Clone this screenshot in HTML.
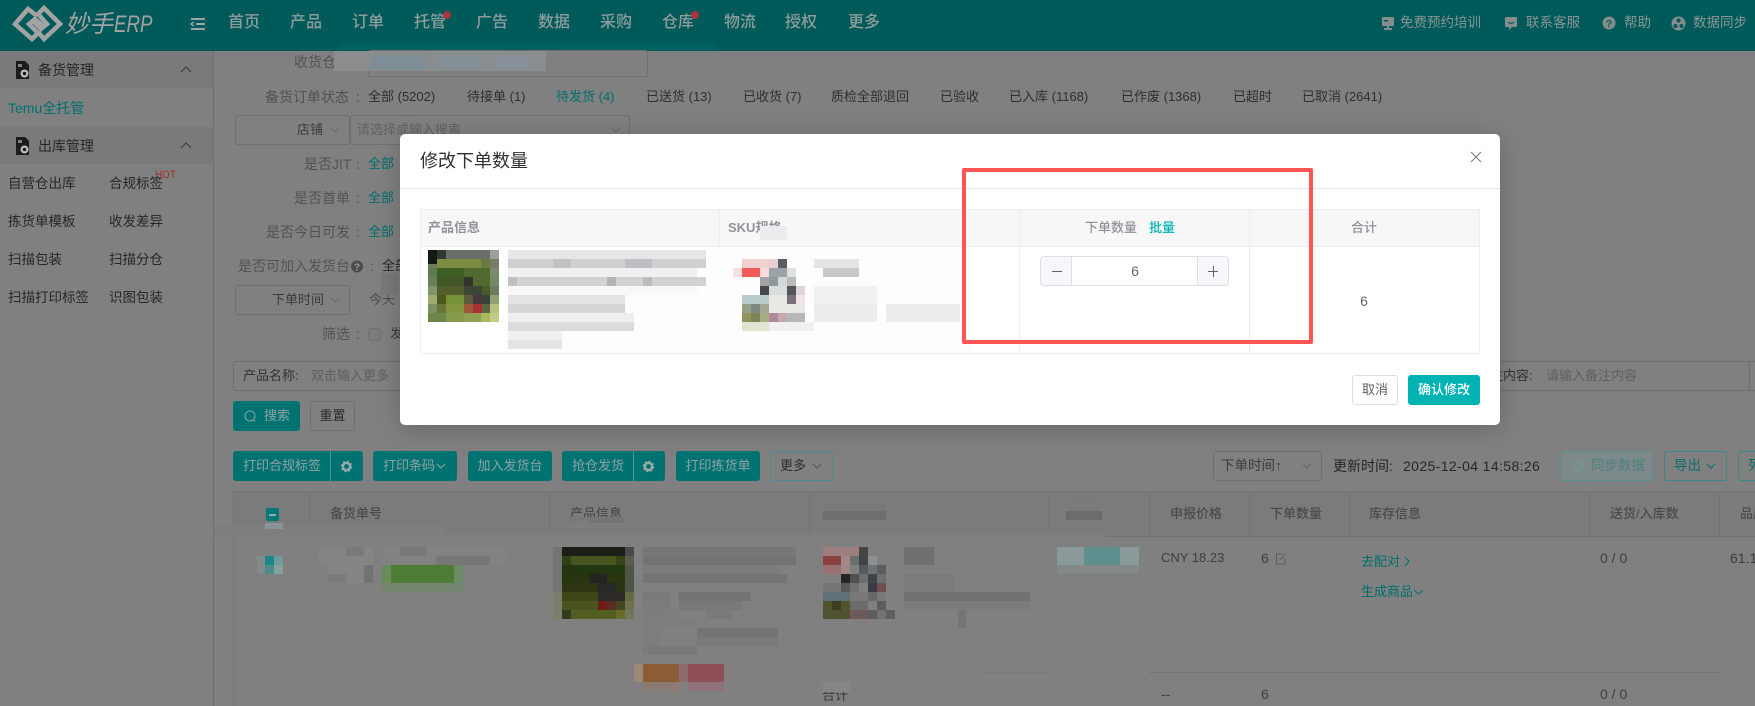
<!DOCTYPE html>
<html lang="zh"><head><meta charset="utf-8"><title>修改下单数量</title>
<style>
*{box-sizing:border-box}
html,body{margin:0;padding:0}
body{width:1755px;height:706px;position:relative;overflow:hidden;background:#808080;font:13px/20px "Liberation Sans","Noto Sans CJK SC",sans-serif;color:#333}
.t{position:absolute;white-space:nowrap;line-height:20px}
.b{position:absolute}
svg{position:absolute;overflow:visible}
.nav{font-size:16px;font-weight:500;color:#8f9c9c;top:13px;width:32px}
.top{color:#8a9595;top:13px;font-size:13.5px}
.side{color:#262626;font-size:14px}
.lab{color:#525252;font-size:14px}
.st{color:#2e2e2e;top:87px}
.tl{color:#006e6e}
.btn{position:absolute;background:#007272;border-radius:3px;height:30px;color:#90a2a2;font-size:13px;line-height:30px;text-align:center;white-space:nowrap}
.sep{position:absolute;top:0;width:1px;height:30px;background:#4f9292}
.box{position:absolute;border:1px solid #6f6f6f;border-radius:3px}
.th{color:#4a4a4a;font-size:13px;font-weight:500;top:504px;position:absolute;white-space:nowrap;line-height:20px}
.d{color:#3a3a3a}
#dlg{position:absolute;left:400px;top:134px;width:1100px;height:291px;background:#fff;border-radius:5px;box-shadow:0 4px 26px rgba(0,0,0,.2)}
.dt{color:#909399;font-weight:700;font-size:13px}
</style></head><body>

<!-- header -->
<div class="b" style="left:0;top:0;width:1755px;height:51px;background:#005a5a"></div>
<div class="b" style="left:337px;top:43px;width:381px;height:8px;background:#005f5f;border-radius:6px 6px 0 0"></div>
<svg style="left:0;top:0" width="70" height="51" fill="none" stroke="#a3a3a3" stroke-width="4.5" stroke-linejoin="miter">
<path d="M37 16 L28 9 L15 24 L32 39 L38 33 L29 24 L35 19 L43 26"/>
<path d="M38 32 L44 39 L60 24 L44 8 L38 14 L47 24 L41 29 L33 21"/>
</svg>
<div class="t" style="left:65px;top:11px;font-size:24px;line-height:28px;font-style:italic;color:#a3a3a3">妙手</div>
<div class="t" style="left:114px;top:11px;font-size:24px;line-height:28px;font-style:italic;color:#a3a3a3;transform:scaleX(.78);transform-origin:0 0">ERP</div>
<svg style="left:190px;top:17px" width="16" height="14" fill="none" stroke="#9aa3a3" stroke-width="2"><path d="M1 2H15M6 7H15M1 12H15"/><path d="M4 5L1 7L4 9" stroke-width="1.4"/></svg>
<div class="t nav" style="left:228px">首页</div><div class="t nav" style="left:290px">产品</div><div class="t nav" style="left:352px">订单</div><div class="t nav" style="left:414px">托管</div><div class="t nav" style="left:476px">广告</div><div class="t nav" style="left:538px">数据</div><div class="t nav" style="left:600px">采购</div><div class="t nav" style="left:662px">仓库</div><div class="t nav" style="left:724px">物流</div><div class="t nav" style="left:785px">授权</div><div class="t nav" style="left:848px">更多</div>
<div class="b" style="left:443px;top:11px;width:8px;height:8px;border-radius:50%;background:#a8343f"></div>
<div class="b" style="left:691px;top:11px;width:8px;height:8px;border-radius:50%;background:#a8343f"></div>
<svg style="left:1381px;top:16px" width="14" height="15" fill="#858c8c"><rect x="1" y="1" width="12" height="9" rx="1"/><rect x="6" y="10" width="2" height="3"/><rect x="3" y="12" width="8" height="2"/><rect x="3" y="4" width="4" height="1.5" fill="#005a5a"/></svg>
<div class="t top" style="left:1400px">免费预约培训</div>
<svg style="left:1504px;top:16px" width="14" height="15" fill="#858c8c"><path d="M1 2Q1 1 2 1H12Q13 1 13 2V10Q13 11 12 11H8L5 14V11H2Q1 11 1 10Z"/><path d="M4 6Q7 9 10 6" stroke="#005a5a" fill="none" stroke-width="1.2"/></svg>
<div class="t top" style="left:1526px">联系客服</div>
<svg style="left:1602px;top:16px" width="14" height="14"><circle cx="7" cy="7" r="6.5" fill="#858c8c"/><text x="7" y="11" font-size="10" font-weight="700" text-anchor="middle" fill="#005a5a" font-family="Liberation Sans">?</text></svg>
<div class="t top" style="left:1624px">帮助</div>
<svg style="left:1671px;top:16px" width="15" height="15"><circle cx="7.5" cy="7.5" r="7" fill="#858c8c"/><circle cx="7.5" cy="4.5" r="2" fill="#005a5a"/><circle cx="4.5" cy="10" r="2" fill="#005a5a"/><circle cx="10.5" cy="10" r="2" fill="#005a5a"/></svg>
<div class="t top" style="left:1693px">数据同步</div>

<!-- sidebar -->
<div class="b" style="left:213px;top:51px;width:1px;height:655px;background:#6f6f6f"></div>
<div class="b" style="left:0;top:51px;width:213px;height:37px;background:#7a7a7a"></div>
<div class="b" style="left:0;top:127px;width:213px;height:37px;background:#7a7a7a"></div>
<svg style="left:15px;top:61px" width="16" height="18"><path d="M1 0H10L14 4V18H1Z" fill="#1d1a1c"/><rect x="3" y="3" width="4" height="3" fill="#808080"/><circle cx="9.5" cy="12.5" r="4" fill="#bbb"/><circle cx="9.5" cy="12.5" r="1.7" fill="#1d1a1c"/></svg>
<div class="t side" style="left:38px;top:60px">备货管理</div>
<svg style="left:180px;top:66px" width="12" height="8" fill="none" stroke="#3a3a3a" stroke-width="1"><path d="M1 6L6 1L11 6"/></svg>
<div class="t tl" style="left:8px;top:98px;font-size:14px;color:#007070">Temu全托管</div>
<svg style="left:15px;top:137px" width="16" height="18"><path d="M1 0H10L14 4V18H1Z" fill="#1d1a1c"/><rect x="3" y="3" width="4" height="3" fill="#808080"/><circle cx="9.5" cy="12.5" r="4" fill="#bbb"/><circle cx="9.5" cy="12.5" r="1.7" fill="#1d1a1c"/></svg>
<div class="t side" style="left:38px;top:136px">出库管理</div>
<svg style="left:180px;top:142px" width="12" height="8" fill="none" stroke="#3a3a3a" stroke-width="1"><path d="M1 6L6 1L11 6"/></svg>
<div class="t side" style="left:8px;top:174px;font-size:13.5px">自营仓出库</div><div class="t side" style="left:109px;top:174px;font-size:13.5px">合规标签</div>
<div class="t" style="left:155px;top:170px;font-size:11px;line-height:11px;color:#a03030;transform:scaleX(.9);transform-origin:0 0">HOT</div>
<div class="t side" style="left:8px;top:212px;font-size:13.5px">拣货单模板</div><div class="t side" style="left:109px;top:212px;font-size:13.5px">收发差异</div>
<div class="t side" style="left:8px;top:250px;font-size:13.5px">扫描包装</div><div class="t side" style="left:109px;top:250px;font-size:13.5px">扫描分仓</div>
<div class="t side" style="left:8px;top:288px;font-size:13.5px">扫描打印标签</div><div class="t side" style="left:109px;top:288px;font-size:13.5px">识图包装</div>

<!-- filters -->
<div class="t lab" style="left:294px;top:52px">收货仓</div>
<div class="box" style="left:368px;top:50px;width:280px;height:27px"></div>
<svg style="left:0;top:0" width="1755" height="706"><rect x="334" y="51" width="212" height="20" fill="#8a8c8e"/><rect x="371" y="55" width="55" height="15" fill="#7f8e96"/><rect x="436" y="55" width="46" height="15" fill="#849095"/><rect x="497" y="55" width="32" height="15" fill="#88909a"/></svg>
<div class="t lab" style="left:265px;top:87px;font-size:14px">备货订单状态</div><div class="t lab" style="left:356px;top:87px">:</div>
<div class="t st" style="left:368px">全部 (5202)</div><div class="t st" style="left:467px">待接单 (1)</div><div class="t st" style="left:556px;color:#006e6e">待发货 (4)</div><div class="t st" style="left:646px">已送货 (13)</div><div class="t st" style="left:743px">已收货 (7)</div><div class="t st" style="left:831px">质检全部退回</div><div class="t st" style="left:940px">已验收</div><div class="t st" style="left:1009px">已入库 (1168)</div><div class="t st" style="left:1121px">已作废 (1368)</div><div class="t st" style="left:1233px">已超时</div><div class="t st" style="left:1302px">已取消 (2641)</div>
<div class="box" style="left:235px;top:115px;width:115px;height:30px"></div>
<div class="t d" style="left:297px;top:120px">店铺</div>
<svg style="left:330px;top:127px" width="10" height="6" fill="none" stroke="#666"><path d="M1 1L5 5L9 1"/></svg>
<div class="box" style="left:350px;top:115px;width:280px;height:30px"></div>
<div class="t" style="left:357px;top:120px;color:#626262">请选择或输入搜索</div>
<svg style="left:611px;top:127px" width="10" height="6" fill="none" stroke="#666"><path d="M1 1L5 5L9 1"/></svg>
<div class="t lab" style="left:304px;top:154px">是否JIT</div><div class="t lab" style="left:356px;top:154px">:</div><div class="t tl" style="left:368px;top:154px">全部</div>
<div class="t lab" style="left:294px;top:188px">是否首单</div><div class="t lab" style="left:356px;top:188px">:</div><div class="t tl" style="left:368px;top:188px">全部</div>
<div class="t lab" style="left:266px;top:222px">是否今日可发</div><div class="t lab" style="left:356px;top:222px">:</div><div class="t tl" style="left:368px;top:222px">全部</div>
<div class="t lab" style="left:238px;top:256px">是否可加入发货台</div>
<svg style="left:351px;top:260px" width="13" height="13"><circle cx="6" cy="6.5" r="6" fill="#4c4c4c"/><text x="6" y="10.3" font-size="10" font-weight="700" text-anchor="middle" fill="#999" font-family="Liberation Sans">?</text></svg>
<div class="t lab" style="left:370px;top:256px">:</div><div class="t d" style="left:382px;top:256px;color:#262626">全部</div>
<div class="box" style="left:235px;top:285px;width:115px;height:30px"></div>
<div class="t d" style="left:272px;top:290px">下单时间</div>
<svg style="left:330px;top:297px" width="10" height="6" fill="none" stroke="#666"><path d="M1 1L5 5L9 1"/></svg>
<div class="t" style="left:369px;top:290px;color:#4d4d4d">今天</div>
<div class="b" style="left:381px;top:273px;width:18px;height:22px;background:#7a7a7a"></div>
<div class="t lab" style="left:322px;top:324px">筛选</div><div class="t lab" style="left:356px;top:324px">:</div>
<div class="box" style="left:368px;top:328px;width:13px;height:13px;background:#7c7c7c"></div>
<div class="t d" style="left:390px;top:324px">发</div>

<div class="box" style="left:233px;top:361px;width:1530px;height:30px"></div>
<div class="b" style="left:1749px;top:361px;width:1px;height:30px;background:#6f6f6f"></div>
<div class="t" style="left:243px;top:366px;color:#343434;font-size:13px">产品名称:</div>
<div class="t" style="left:311px;top:366px;color:#5f5f5f;font-size:13px">双击输入更多</div>
<div class="t" style="left:1477px;top:366px;color:#343434;font-size:13px">备注内容:</div>
<div class="t" style="left:1546px;top:366px;color:#5f5f5f;font-size:13px">请输入备注内容</div>

<div class="btn" style="left:233px;top:401px;width:67px;padding-left:31px;text-align:left">搜索</div>
<svg style="left:244px;top:410px" width="13" height="13" fill="none" stroke="#7fa0a0" stroke-width="1.1"><circle cx="6" cy="6" r="5"/><path d="M9.5 10L11 11.5"/></svg>
<div class="btn" style="left:310px;top:401px;width:45px;background:none;border:1px solid #707070;color:#2a2a2a;line-height:28px">重置</div>

<div class="btn" style="left:233px;top:451px;width:130px;text-align:left;padding-left:10px">打印合规标签<div class="sep" style="left:97px"></div></div>
<svg style="left:340px;top:460px" width="13" height="13"><circle cx="6.5" cy="6.5" r="3.6" fill="none" stroke="#98aaaa" stroke-width="2.4"/><circle cx="6.5" cy="6.5" r="5" fill="none" stroke="#98aaaa" stroke-width="1.6" stroke-dasharray="2 1.93"/></svg>
<div class="btn" style="left:373px;top:451px;width:84px;text-align:left;padding-left:10px">打印条码</div>
<svg style="left:436px;top:463px" width="10" height="6" fill="none" stroke="#92a4a4"><path d="M1 1L5 5L9 1"/></svg>
<div class="btn" style="left:468px;top:451px;width:84px">加入发货台</div>
<div class="btn" style="left:562px;top:451px;width:103px;text-align:left;padding-left:10px">抢仓发货<div class="sep" style="left:71px"></div></div>
<svg style="left:642px;top:460px" width="13" height="13"><circle cx="6.5" cy="6.5" r="3.6" fill="none" stroke="#98aaaa" stroke-width="2.4"/><circle cx="6.5" cy="6.5" r="5" fill="none" stroke="#98aaaa" stroke-width="1.6" stroke-dasharray="2 1.93"/></svg>
<div class="btn" style="left:676px;top:451px;width:84px">打印拣货单</div>
<div class="btn" style="left:770px;top:451px;width:63px;background:none;border:1px solid #4c8c8c;color:#2c2c2c;line-height:28px;text-align:left;padding-left:9px">更多</div>
<svg style="left:812px;top:463px" width="10" height="6" fill="none" stroke="#4a5a5a"><path d="M1 1L5 5L9 1"/></svg>

<div class="box" style="left:1213px;top:451px;width:109px;height:30px"></div>
<div class="t d" style="left:1221px;top:456px;font-size:13.5px">下单时间↑</div>
<svg style="left:1302px;top:463px" width="10" height="6" fill="none" stroke="#666"><path d="M1 1L5 5L9 1"/></svg>
<div class="t" style="left:1333px;top:456px;color:#262626;font-size:14px">更新时间:</div>
<div class="t" style="left:1403px;top:456px;color:#262626;font-size:14px;letter-spacing:.38px">2025-12-04 14:58:26</div>
<div class="box" style="left:1561px;top:451px;width:92px;height:30px;border-color:#5d9292;background:#7e8a8a"></div>
<svg style="left:1572px;top:459px" width="13" height="13" fill="none" stroke="#6e9c9c" stroke-width="1.3"><path d="M6.5 1V4M6.5 9V12M1 6.5H4M9 6.5H12M2.8 2.8L4.8 4.8M8.2 8.2L10.2 10.2M2.8 10.2L4.8 8.2M8.2 4.8L10.2 2.8"/></svg>
<div class="t" style="left:1591px;top:456px;color:#4f8080;font-size:13.5px">同步数据</div>
<div class="box" style="left:1664px;top:451px;width:63px;height:30px;border-color:#3f8686"></div>
<div class="t" style="left:1674px;top:456px;color:#0a6c6c;font-size:13.5px">导出</div>
<svg style="left:1706px;top:463px" width="10" height="6" fill="none" stroke="#0a6c6c"><path d="M1 1L5 5L9 1"/></svg>
<div class="box" style="left:1738px;top:451px;width:40px;height:30px;border-color:#3f8686"></div>
<div class="t" style="left:1748px;top:456px;color:#0a6c6c;font-size:13.5px">列</div>

<!-- table -->
<div class="b" style="left:233px;top:491px;width:1522px;height:46px;background:#7b7b7b;border:1px solid #737373;border-right:none"></div>
<div class="b" style="left:233px;top:537px;width:1px;height:169px;background:#777"></div>
<div class="b" style="left:309px;top:492px;width:1px;height:44px;background:#737373"></div>
<div class="b" style="left:549px;top:492px;width:1px;height:44px;background:#737373"></div>
<div class="b" style="left:809px;top:492px;width:1px;height:44px;background:#737373"></div>
<div class="b" style="left:1049px;top:492px;width:1px;height:44px;background:#757575"></div>
<div class="b" style="left:1149px;top:492px;width:1px;height:44px;background:#737373"></div>
<div class="b" style="left:1249px;top:492px;width:1px;height:44px;background:#737373"></div>
<div class="b" style="left:1349px;top:492px;width:1px;height:44px;background:#737373"></div>
<div class="b" style="left:1589px;top:492px;width:1px;height:44px;background:#737373"></div>
<div class="b" style="left:1719px;top:492px;width:1px;height:44px;background:#737373"></div>
<div class="b" style="left:266px;top:508px;width:13px;height:13px;border-radius:2px;background:#007878"></div>
<div class="b" style="left:269px;top:514px;width:7px;height:1.5px;background:#97acac"></div>
<div class="th" style="left:330px">备货单号</div>
<div class="th" style="left:570px">产品信息</div>
<div class="th" style="left:1170px">申报价格</div>
<div class="th" style="left:1270px">下单数量</div>
<div class="th" style="left:1369px">库存信息</div>
<div class="th" style="left:1610px">送货/入库数</div>
<div class="th" style="left:1740px">品质</div>

<div class="t" style="left:1161px;top:548px;color:#3d3d3d">CNY 18.23</div>
<div class="t" style="left:1261px;top:548px;color:#3d3d3d;font-size:14px">6</div>
<svg style="left:1275px;top:552px" width="12" height="13" fill="none" stroke="#5f5f5f"><path d="M8 2H1.5V12H10V6"/><path d="M5 8L10.5 1.5"/></svg>
<div class="t tl" style="left:1361px;top:552px;font-size:13px">去配对</div>
<svg style="left:1404px;top:556px" width="6" height="11" fill="none" stroke="#006e6e"><path d="M1 1L5 5.5L1 10"/></svg>
<div class="t tl" style="left:1361px;top:582px;font-size:13px">生成商品</div>
<svg style="left:1413px;top:589px" width="11" height="7" fill="none" stroke="#006e6e"><path d="M1 1L5.5 5L10 1"/></svg>
<div class="t" style="left:1600px;top:548px;color:#3d3d3d;font-size:14px">0 / 0</div>
<div class="t" style="left:1730px;top:548px;color:#3d3d3d;font-size:14px">61.16</div>
<div class="b" style="left:1149px;top:672px;width:570px;height:1px;background:#757575"></div>
<div class="b" style="left:980px;top:672px;width:69px;height:1px;background:#7a7a7a"></div>
<div class="t" style="left:1161px;top:684px;color:#3d3d3d;font-size:14px">--</div>
<div class="t" style="left:1261px;top:684px;color:#3d3d3d;font-size:14px">6</div>
<div class="t" style="left:1600px;top:684px;color:#3d3d3d;font-size:14px">0 / 0</div>
<div class="t" style="left:822px;top:686px;color:#3a3a3a;font-size:13px">合计</div>

<!-- blurred data, page -->
<svg style="left:0;top:0" width="1755" height="706" shape-rendering="crispEdges">
<rect x="214" y="525" width="230" height="13" fill="#7e7e7e"/><rect x="444" y="534" width="662" height="4" fill="#7e7e7e"/>
<rect x="265" y="523" width="18" height="6" fill="#8a9494"/>
<rect x="570" y="517" width="55" height="3" fill="#777"/><rect x="590" y="518" width="35" height="8" fill="#747474"/><rect x="570" y="523" width="55" height="5" fill="#7e7e7e"/>
<rect x="823" y="502" width="63" height="18" fill="#6e6e6e"/><rect x="823" y="502" width="63" height="9" fill="#797979"/>
<rect x="1066" y="502" width="36" height="18" fill="#6c6c6c"/><rect x="1066" y="502" width="36" height="9" fill="#7a7a7a"/>
<rect x="257" y="556" width="8" height="18" fill="#848a8a"/><rect x="265" y="556" width="9" height="9" fill="#1a8686"/><rect x="265" y="565" width="9" height="9" fill="#4d8a8a"/><rect x="274" y="556" width="9" height="9" fill="#6d9a9a"/><rect x="274" y="565" width="9" height="9" fill="#86a0a0"/>
<rect x="319" y="547" width="54" height="18" fill="#858585"/><rect x="328" y="565" width="45" height="18" fill="#848484"/><rect x="346" y="547" width="18" height="9" fill="#7a7a7a"/><rect x="364" y="565" width="9" height="18" fill="#727272"/><rect x="328" y="574" width="18" height="9" fill="#7a7a7a"/>
<rect x="382" y="547" width="126" height="18" fill="#828282"/><rect x="400" y="547" width="27" height="9" fill="#787878"/><rect x="436" y="556" width="54" height="9" fill="#777"/>
<rect x="382" y="565" width="81" height="18" fill="#4f7c34"/><rect x="382" y="565" width="9" height="18" fill="#6a8a5a"/><rect x="454" y="565" width="9" height="18" fill="#6c8c66"/><rect x="382" y="583" width="81" height="9" fill="#74846f"/>
<g><rect x="553" y="547" width="9" height="72" fill="#727572"/>
<rect x="562" y="547" width="63" height="9" fill="#1c1e18"/><rect x="625" y="547" width="9" height="9" fill="#4a4a4a"/>
<rect x="562" y="556" width="9" height="9" fill="#2f4216"/><rect x="571" y="556" width="45" height="9" fill="#4a5620"/><rect x="616" y="556" width="9" height="9" fill="#3a4018"/><rect x="625" y="556" width="9" height="9" fill="#5a5c4c"/>
<rect x="562" y="565" width="63" height="9" fill="#223612"/><rect x="625" y="565" width="9" height="9" fill="#505845"/>
<rect x="562" y="574" width="27" height="9" fill="#28360f"/><rect x="589" y="574" width="18" height="9" fill="#242420"/><rect x="607" y="574" width="18" height="9" fill="#2a3512"/><rect x="625" y="574" width="9" height="9" fill="#4e5545"/>
<rect x="562" y="583" width="36" height="9" fill="#2e3512"/><rect x="598" y="583" width="18" height="9" fill="#26282a"/><rect x="616" y="583" width="9" height="9" fill="#2a3412"/><rect x="625" y="583" width="9" height="9" fill="#4e5448"/>
<rect x="553" y="592" width="9" height="27" fill="#7c7d6c"/>
<rect x="562" y="592" width="36" height="9" fill="#3e4816"/><rect x="598" y="592" width="27" height="9" fill="#2e2a28"/><rect x="625" y="592" width="9" height="9" fill="#646843"/>
<rect x="562" y="601" width="36" height="9" fill="#4a5420"/><rect x="598" y="601" width="9" height="9" fill="#6e1e14"/><rect x="607" y="601" width="9" height="9" fill="#5a2e24"/><rect x="616" y="601" width="9" height="9" fill="#444820"/><rect x="625" y="601" width="9" height="9" fill="#6e7050"/>
<rect x="562" y="610" width="9" height="9" fill="#2e3e1c"/><rect x="571" y="610" width="45" height="9" fill="#525e22"/><rect x="616" y="610" width="9" height="9" fill="#686b2a"/><rect x="625" y="610" width="9" height="9" fill="#72755a"/></g>
<rect x="643" y="547" width="153" height="9" fill="#767878"/><rect x="643" y="556" width="153" height="9" fill="#727474"/><rect x="643" y="565" width="135" height="9" fill="#7c7c7c"/><rect x="643" y="574" width="144" height="9" fill="#757575"/>
<rect x="643" y="592" width="27" height="9" fill="#7a7a7a"/><rect x="679" y="592" width="72" height="9" fill="#737373"/><rect x="643" y="601" width="27" height="9" fill="#7b7b7b"/><rect x="679" y="601" width="63" height="9" fill="#787878"/>
<rect x="643" y="610" width="36" height="9" fill="#7d7d7d"/><rect x="706" y="610" width="27" height="9" fill="#7a7a7a"/><rect x="643" y="619" width="54" height="9" fill="#7e7e7e"/>
<rect x="643" y="628" width="18" height="18" fill="#7d7d7d"/><rect x="697" y="628" width="81" height="9" fill="#747474"/><rect x="697" y="637" width="81" height="9" fill="#7a7a7a"/>
<rect x="643" y="646" width="54" height="9" fill="#7a7a7a"/><rect x="643" y="655" width="54" height="9" fill="#838080"/>
<rect x="634" y="664" width="9" height="18" fill="#9a8878"/><rect x="643" y="664" width="36" height="18" fill="#8b5c36"/><rect x="679" y="664" width="9" height="18" fill="#8b6b6b"/><rect x="688" y="664" width="36" height="18" fill="#8f4f58"/>
<rect x="643" y="682" width="36" height="9" fill="#8a7c72"/><rect x="688" y="682" width="36" height="9" fill="#8f7178"/>
<!-- sku -->
<rect x="823" y="547" width="36" height="9" fill="#9d7e7e"/><rect x="859" y="547" width="9" height="9" fill="#454545"/>
<rect x="823" y="556" width="18" height="9" fill="#8a4040"/><rect x="841" y="556" width="9" height="9" fill="#a08888"/><rect x="850" y="556" width="9" height="9" fill="#6e6e6e"/><rect x="859" y="556" width="9" height="9" fill="#404448"/><rect x="868" y="556" width="9" height="9" fill="#8e8e8e"/>
<rect x="823" y="565" width="18" height="9" fill="#9a7070"/><rect x="841" y="565" width="9" height="9" fill="#a08888"/><rect x="859" y="565" width="9" height="9" fill="#56595c"/><rect x="868" y="565" width="9" height="9" fill="#6e7274"/><rect x="877" y="565" width="9" height="9" fill="#5a5e60"/>
<rect x="841" y="574" width="9" height="9" fill="#262626"/><rect x="850" y="574" width="9" height="9" fill="#505050"/><rect x="859" y="574" width="9" height="9" fill="#6a6e70"/><rect x="868" y="574" width="9" height="9" fill="#3e4448"/><rect x="877" y="574" width="9" height="9" fill="#6e6e6e"/>
<rect x="823" y="583" width="18" height="9" fill="#757575"/><rect x="841" y="583" width="9" height="9" fill="#585858"/><rect x="850" y="583" width="9" height="9" fill="#707070"/><rect x="868" y="583" width="9" height="9" fill="#383c48"/><rect x="877" y="583" width="9" height="9" fill="#6f5050"/>
<rect x="823" y="592" width="27" height="9" fill="#5f7078"/><rect x="850" y="592" width="18" height="9" fill="#787878"/><rect x="868" y="592" width="9" height="9" fill="#686868"/><rect x="877" y="592" width="9" height="9" fill="#797979"/>
<rect x="823" y="601" width="9" height="9" fill="#52542f"/><rect x="832" y="601" width="9" height="9" fill="#3c3c22"/><rect x="841" y="601" width="9" height="9" fill="#52542f"/><rect x="850" y="601" width="18" height="9" fill="#6c6c6c"/><rect x="877" y="601" width="9" height="9" fill="#5a5e5a"/>
<rect x="823" y="610" width="27" height="9" fill="#505232"/><rect x="850" y="610" width="18" height="9" fill="#6e5a5a"/><rect x="868" y="610" width="9" height="9" fill="#5c5c5c"/><rect x="877" y="610" width="9" height="9" fill="#727272"/><rect x="886" y="610" width="9" height="9" fill="#5f5f5f"/>
<rect x="904" y="547" width="30" height="18" fill="#6f7070"/><rect x="904" y="574" width="51" height="18" fill="#7b7b7b"/>
<rect x="904" y="592" width="126" height="9" fill="#727272"/><rect x="904" y="601" width="126" height="9" fill="#7c7c7c"/><rect x="958" y="610" width="8" height="18" fill="#757575"/>
<rect x="823" y="682" width="27" height="10" fill="#868686"/>
<!-- col4 -->
<rect x="1057" y="547" width="82" height="18" fill="#8a9a9a"/><rect x="1084" y="547" width="36" height="18" fill="#5f8f8f"/><rect x="1057" y="565" width="82" height="9" fill="#848888"/>
</svg>

<!-- dialog -->
<div id="dlg"></div>
<div class="t" style="left:420px;top:148px;font-size:18px;line-height:26px;color:#303133">修改下单数量</div>
<svg style="left:1470px;top:151px" width="12" height="12" fill="none" stroke="#777"><path d="M1 1L11 11M11 1L1 11"/></svg>
<div class="b" style="left:400px;top:188px;width:1100px;height:1px;background:#e4e4ee"></div>
<div class="b" style="left:420px;top:209px;width:1060px;height:145px;border:1px solid #ebeef5"></div>
<div class="b" style="left:421px;top:210px;width:1058px;height:37px;background:#f7f7f8;border-bottom:1px solid #ebeef5"></div>
<div class="b" style="left:719px;top:209px;width:1px;height:145px;background:#ebeef5"></div>
<div class="b" style="left:1019px;top:209px;width:1px;height:145px;background:#ebeef5"></div>
<div class="b" style="left:1249px;top:209px;width:1px;height:145px;background:#ebeef5"></div>
<div class="b" style="left:505px;top:247px;width:467px;height:104px;background:#fdfdfe"></div>
<div class="t dt" style="left:428px;top:218px">产品信息</div>
<div class="t dt" style="left:728px;top:218px">SKU规格</div>
<div class="t dt" style="left:1085px;top:218px;font-weight:500">下单数量</div>
<div class="t" style="left:1149px;top:218px;color:#00b3b3;font-size:13px;font-weight:500">批量</div>
<div class="t dt" style="left:1351px;top:218px;font-weight:500">合计</div>

<div class="b" style="left:1040px;top:256px;width:189px;height:30px;border:1px solid #dcdfe6;border-radius:4px;background:#fff;overflow:hidden">
<div class="b" style="left:0;top:0;width:31px;height:28px;background:#f5f7fa;border-right:1px solid #dcdfe6"></div>
<div class="b" style="right:0;top:0;width:31px;height:28px;background:#f5f7fa;border-left:1px solid #dcdfe6"></div>
</div>
<div class="b" style="left:1052px;top:271px;width:10px;height:1px;background:#606266"></div>
<div class="b" style="left:1208px;top:271px;width:10px;height:1px;background:#606266"></div>
<div class="b" style="left:1213px;top:266px;width:1px;height:11px;background:#606266"></div>
<div class="t" style="left:1130px;top:261px;font-size:14px;color:#606266;width:10px;text-align:center">6</div>
<div class="t" style="left:1359px;top:291px;font-size:14px;color:#606266;width:10px;text-align:center">6</div>

<svg style="left:0;top:0" width="1755" height="706" shape-rendering="crispEdges">
<!-- product image -->
<rect x="428" y="250" width="71" height="72" fill="#6f7a5a"/>
<rect x="428" y="250" width="9" height="14" fill="#101a10"/><rect x="437" y="250" width="9" height="9" fill="#303830"/><rect x="446" y="250" width="44" height="9" fill="#6a6e68"/><rect x="490" y="250" width="9" height="9" fill="#9aa09c"/>
<rect x="437" y="259" width="44" height="9" fill="#7c8c42"/><rect x="481" y="259" width="9" height="9" fill="#6a7a42"/><rect x="490" y="259" width="9" height="9" fill="#7a7a68"/>
<rect x="428" y="268" width="9" height="9" fill="#5d7d50"/><rect x="437" y="268" width="27" height="9" fill="#3c5e22"/><rect x="464" y="268" width="26" height="9" fill="#506a2e"/><rect x="490" y="268" width="9" height="9" fill="#7a8a6c"/>
<rect x="428" y="277" width="9" height="9" fill="#6a8058"/><rect x="437" y="277" width="27" height="9" fill="#425628"/><rect x="464" y="277" width="9" height="9" fill="#33352c"/><rect x="473" y="277" width="17" height="9" fill="#52692e"/><rect x="490" y="277" width="9" height="9" fill="#748868"/>
<rect x="428" y="286" width="9" height="9" fill="#7f9468"/><rect x="437" y="286" width="27" height="9" fill="#525e2c"/><rect x="464" y="286" width="18" height="9" fill="#3e4438"/><rect x="482" y="286" width="8" height="9" fill="#4a5c28"/><rect x="490" y="286" width="9" height="9" fill="#6c7a5e"/>
<rect x="428" y="295" width="9" height="9" fill="#9dab70"/><rect x="437" y="295" width="9" height="9" fill="#4c5820"/><rect x="446" y="295" width="18" height="9" fill="#769236"/><rect x="464" y="295" width="9" height="9" fill="#5a5c38"/><rect x="473" y="295" width="9" height="9" fill="#4c3640"/><rect x="482" y="295" width="8" height="9" fill="#3a4238"/><rect x="490" y="295" width="9" height="9" fill="#8fa070"/>
<rect x="428" y="304" width="9" height="9" fill="#7e9060"/><rect x="437" y="304" width="9" height="9" fill="#68743a"/><rect x="446" y="304" width="18" height="9" fill="#849540"/><rect x="464" y="304" width="9" height="9" fill="#9a5834"/><rect x="473" y="304" width="9" height="9" fill="#a83030"/><rect x="482" y="304" width="8" height="9" fill="#5c6640"/><rect x="490" y="304" width="9" height="9" fill="#b8c080"/>
<rect x="428" y="313" width="18" height="9" fill="#6e8448"/><rect x="446" y="313" width="18" height="9" fill="#84994a"/><rect x="464" y="313" width="17" height="9" fill="#90a155"/><rect x="481" y="313" width="9" height="9" fill="#a8b85a"/><rect x="490" y="313" width="9" height="9" fill="#c0cc88"/>
<!-- text blur -->
<rect x="508" y="250" width="198" height="9" fill="#e6e6e8"/><rect x="508" y="259" width="198" height="9" fill="#d0d0d3"/><rect x="508" y="268" width="189" height="9" fill="#f0f0f2"/><rect x="508" y="277" width="198" height="9" fill="#d2d2d5"/><rect x="508" y="286" width="189" height="9" fill="#f8f8f9"/>
<rect x="553" y="259" width="18" height="9" fill="#c2c2c5"/><rect x="625" y="259" width="27" height="9" fill="#bebec2"/><rect x="508" y="277" width="9" height="9" fill="#c0c0c3"/><rect x="607" y="277" width="9" height="9" fill="#b4b4b7"/><rect x="643" y="277" width="9" height="9" fill="#bbbbbe"/>
<rect x="508" y="295" width="117" height="9" fill="#e4e4e6"/><rect x="508" y="304" width="117" height="9" fill="#d6d6d8"/><rect x="508" y="313" width="126" height="9" fill="#eeeef0"/><rect x="508" y="322" width="126" height="9" fill="#dcdcde"/><rect x="508" y="331" width="54" height="9" fill="#f0f0f2"/><rect x="508" y="340" width="54" height="9" fill="#e4e4e6"/>
<!-- sku image -->
<rect x="742" y="259" width="27" height="9" fill="#f2d0d0"/><rect x="769" y="259" width="9" height="9" fill="#e8cfcf"/><rect x="778" y="259" width="9" height="9" fill="#5a5e62"/>
<rect x="733" y="268" width="9" height="9" fill="#f8e0e0"/><rect x="742" y="268" width="18" height="9" fill="#f45a5a"/><rect x="760" y="268" width="9" height="9" fill="#fadcdc"/><rect x="769" y="268" width="18" height="9" fill="#9aa4a8"/><rect x="787" y="268" width="9" height="9" fill="#e0e0de"/>
<rect x="760" y="277" width="9" height="9" fill="#a0a4a4"/><rect x="769" y="277" width="9" height="9" fill="#8e9a9c"/><rect x="778" y="277" width="9" height="9" fill="#d4d8d8"/><rect x="787" y="277" width="9" height="9" fill="#b8bcbc"/>
<rect x="760" y="286" width="9" height="9" fill="#444a4c"/><rect x="769" y="286" width="18" height="9" fill="#dadede"/><rect x="787" y="286" width="9" height="9" fill="#52565a"/><rect x="796" y="286" width="9" height="9" fill="#e0d4d4"/>
<rect x="742" y="295" width="27" height="9" fill="#b8cccc"/><rect x="769" y="295" width="18" height="9" fill="#e8e8e4"/><rect x="787" y="295" width="9" height="9" fill="#7c7078"/><rect x="796" y="295" width="9" height="9" fill="#f0e4e4"/>
<rect x="742" y="304" width="9" height="9" fill="#94a088"/><rect x="751" y="304" width="9" height="9" fill="#7e8a80"/><rect x="760" y="304" width="9" height="9" fill="#a4a890"/><rect x="769" y="304" width="36" height="9" fill="#e8e8e4"/>
<rect x="742" y="313" width="9" height="9" fill="#90945c"/><rect x="751" y="313" width="9" height="9" fill="#7e8458"/><rect x="760" y="313" width="9" height="9" fill="#a8ac80"/><rect x="769" y="313" width="9" height="9" fill="#ac8c98"/><rect x="778" y="313" width="9" height="9" fill="#c4a8ac"/><rect x="787" y="313" width="18" height="9" fill="#b4b8b8"/>
<rect x="742" y="322" width="27" height="9" fill="#e0e4d0"/><rect x="769" y="322" width="45" height="9" fill="#f0f0f2"/>
<rect x="814" y="259" width="45" height="9" fill="#e4e4e6"/><rect x="823" y="268" width="36" height="9" fill="#c8c8cb"/>
<rect x="814" y="286" width="63" height="9" fill="#f1f1f3"/><rect x="814" y="295" width="63" height="9" fill="#f1f1f3"/>
<rect x="814" y="304" width="146" height="9" fill="#ececee"/><rect x="814" y="313" width="146" height="9" fill="#eeeef0"/><rect x="877" y="304" width="9" height="18" fill="#fdfdfe"/>
<rect x="760" y="226" width="27" height="14" fill="#ececee"/>
</svg>

<div class="b" style="left:962px;top:168px;width:351px;height:176px;border:4px solid #ff5555;border-radius:2px"></div>

<div class="b" style="left:1352px;top:375px;width:46px;height:30px;border:1px solid #dcdfe6;border-radius:3px;background:#fff;color:#606266;text-align:center;line-height:28px;font-size:13px">取消</div>
<div class="b" style="left:1408px;top:375px;width:72px;height:30px;border-radius:3px;background:#00b3b3;color:#fff;text-align:center;line-height:30px;font-size:13px;font-weight:500">确认修改</div>
</body></html>
